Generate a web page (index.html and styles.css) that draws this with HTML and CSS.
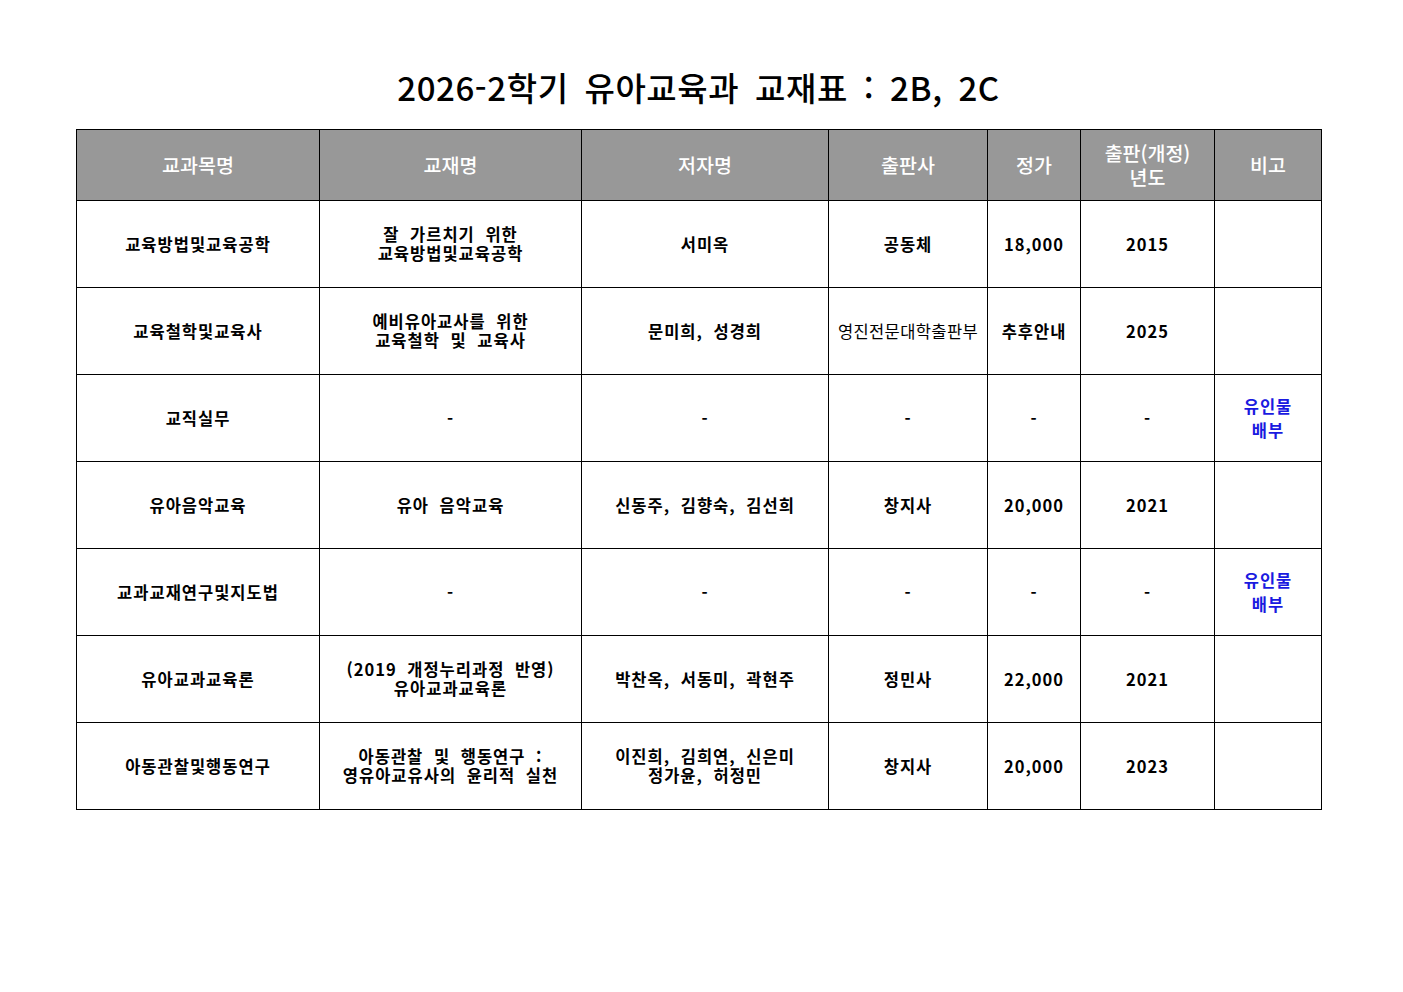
FILE: index.html
```html
<!DOCTYPE html>
<html lang="ko">
<head>
<meta charset="utf-8">
<link rel="stylesheet" href="styles.css">
</head>
<body>
<h1 class="title">2026-2학기 유아교육과 교재표 : 2B, 2C</h1>
<table class="books">
  <colgroup>
    <col class="c1"><col class="c2"><col class="c3"><col class="c4"><col class="c5"><col class="c6"><col class="c7">
  </colgroup>
  <thead>
    <tr>
      <th>교과목명</th><th>교재명</th><th>저자명</th><th>출판사</th><th>정가</th><th>출판(개정)<br>년도</th><th>비고</th>
    </tr>
  </thead>
  <tbody>
    <tr>
      <td>교육방법및교육공학</td><td>잘 가르치기 위한<br>교육방법및교육공학</td><td>서미옥</td><td>공동체</td><td>18,000</td><td>2015</td><td></td>
    </tr>
    <tr>
      <td>교육철학및교육사</td><td>예비유아교사를 위한<br>교육철학 및 교육사</td><td>문미희, 성경희</td><td class="normal">영진전문대학출판부</td><td>추후안내</td><td>2025</td><td></td>
    </tr>
    <tr>
      <td>교직실무</td><td>-</td><td>-</td><td>-</td><td>-</td><td>-</td><td class="note">유인물<br>배부</td>
    </tr>
    <tr>
      <td>유아음악교육</td><td>유아 음악교육</td><td>신동주, 김향숙, 김선희</td><td>창지사</td><td>20,000</td><td>2021</td><td></td>
    </tr>
    <tr>
      <td>교과교재연구및지도법</td><td>-</td><td>-</td><td>-</td><td>-</td><td>-</td><td class="note">유인물<br>배부</td>
    </tr>
    <tr>
      <td>유아교과교육론</td><td>(2019 개정누리과정 반영)<br>유아교과교육론</td><td>박찬옥, 서동미, 곽현주</td><td>정민사</td><td>22,000</td><td>2021</td><td></td>
    </tr>
    <tr>
      <td>아동관찰및행동연구</td><td>아동관찰 및 행동연구 :<br>영유아교유사의 윤리적 실천</td><td>이진희, 김희연, 신은미<br>정가윤, 허정민</td><td>창지사</td><td>20,000</td><td>2023</td><td></td>
    </tr>
  </tbody>
</table>
</body>
</html>
```
FILE: styles.css
```css
html, body {
  margin: 0;
  padding: 0;
  background: #ffffff;
}
body {
  font-family: "Noto Sans CJK KR", "Noto Sans", sans-serif;
  color: #000;
  padding: 0 0 0 76px;
}
.title {
  margin: 0;
  padding-top: 64px;
  height: 65px;
  width: 1245px;
  text-align: center;
  font-size: 33px;
  font-weight: 500;
  line-height: 46px;
  letter-spacing: 0.6px;
  word-spacing: 6px;
}
.books {
  border-collapse: collapse;
  table-layout: fixed;
  width: 1246px;
}
.c1 { width: 243px; }
.c2 { width: 262px; }
.c3 { width: 247px; }
.c4 { width: 159px; }
.c5 { width: 93px; }
.c6 { width: 134px; }
.c7 { width: 107px; }
.books th, .books td {
  border: 1px solid #000;
  text-align: center;
  vertical-align: middle;
  padding: 0 2px;
}
.books th {
  background: #989898;
  color: #fff;
  font-weight: 500;
  font-size: 19.5px;
  line-height: 24px;
  height: 70px;
}
.books td {
  height: 86px;
  font-size: 16.5px;
  font-weight: 700;
  line-height: 19px;
  letter-spacing: 1px;
  word-spacing: 5px;
}
.books td.normal {
  font-weight: 400;
  letter-spacing: 0.4px;
  word-spacing: 0;
}
.books td.note {
  color: #1a1ae0;
  line-height: 24px;
}
```
